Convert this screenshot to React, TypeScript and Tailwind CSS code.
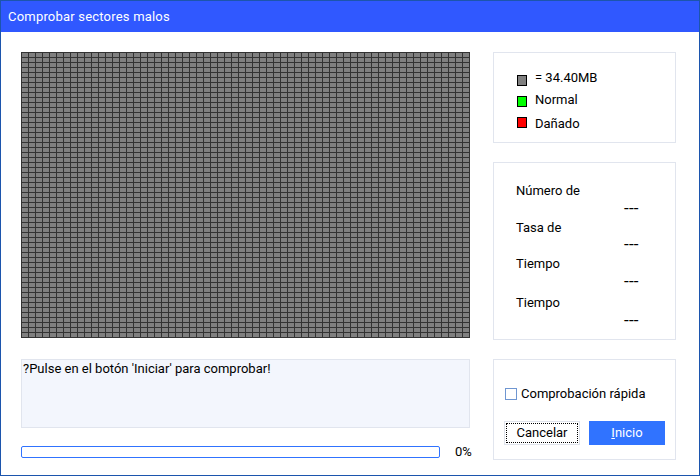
const font = "font-['Roboto',sans-serif]"

function Legend({ color, label, className }: { color: string; label: string; className: string }) {
    return (
        <div className={`flex items-start ${className}`}>
            <span className={`h-[11px] w-[10px] border border-black ${color}`} />
            <span className="ml-2 text-[13px] leading-[16px]">{label}</span>
        </div>
    )
}

function Stat({ label, className, valueClass }: { label: string; className: string; valueClass: string }) {
    return (
        <div className={className}>
            <div className="text-[13px] leading-[16px]">{label}</div>
            <div className={`pl-[108px] text-[17px] leading-[16px] tracking-[0.2px] ${valueClass}`}>---</div>
        </div>
    )
}

export default function App() {
    return (
        <div className={`flex h-[476px] w-[700px] flex-col border border-[#1c55ad] bg-white text-black ${font}`}>
            <div className="flex h-[31px] shrink-0 items-center bg-[#3058ff] pl-[7px] text-[13px] tracking-[0.2px] text-white">
                Comprobar sectores malos
            </div>
            <div className="flex flex-1 pl-5 pr-[23px] pt-5">
                <div className="w-[449px]">
                    <div className="h-[286px] bg-[#808080] bg-[linear-gradient(to_right,#333_1px,transparent_1px),linear-gradient(to_bottom,#333_1px,transparent_1px)] bg-[length:7px_5px] border-r border-b border-[#333]" />
                    <div className="mt-[21px] h-[69px] border border-[#e1e5ee] bg-[#f3f6fd] pl-px text-[13px] leading-[18px]">
                        ?Pulse en el botón 'Iniciar' para comprobar!
                    </div>
                    <div className="mt-[18px] flex items-center">
                        <div className="h-3 w-[419px] shrink-0 rounded-[2px] border border-[#3073ff]" />
                        <span className="ml-[15px] shrink-0 text-[13px] leading-[12px]">0%</span>
                    </div>
                </div>
                <div className="ml-[23px] w-[183px]">
                    <div className="h-[91px] border border-[#e1e5ee] pl-[23px] pt-[17px]">
                        <Legend color="mt-[5px] bg-[#808080]" label="= 34.40MB" className="h-4" />
                        <Legend color="mt-[4px] bg-[#00ff00]" label="Normal" className="mt-[6px] h-4" />
                        <Legend color="mt-px bg-[#ff0000]" label="Dañado" className="mt-[8px] h-4" />
                    </div>
                    <div className="mt-[19px] h-[178px] border border-[#e1e5ee] pl-[22px] pt-[20px]">
                        <Stat label="Número de" className="" valueClass="mt-px" />
                        <Stat label="Tasa de" className="mt-[4px]" valueClass="" />
                        <Stat label="Tiempo" className="mt-[4px]" valueClass="mt-px" />
                        <Stat label="Tiempo" className="mt-[6px]" valueClass="mt-px" />
                    </div>
                    <div className="mt-[19px] h-[101px] border border-[#e1e5ee] px-[10px] pt-[27px]">
                        <label className="flex items-center pl-px">
                            <span className="h-3 w-3 border border-[#6f96d1] bg-white" />
                            <span className="ml-1 text-[13px] leading-[14px]">Comprobación rápida</span>
                        </label>
                        <div className="mt-[20px] flex justify-between">
                            <button className="flex h-6 w-[76px] items-center justify-center border border-[#dfe3ec] p-px">
                                <span className="flex h-full w-full items-center justify-center border border-dotted border-black text-[13px]">
                                    Cancelar
                                </span>
                            </button>
                            <button className="flex h-6 w-[76px] items-center justify-center bg-[#3073ff] text-[13px] text-white">
                                <span><u>I</u>nicio</span>
                            </button>
                        </div>
                    </div>
                </div>
            </div>
        </div>
    )
}
